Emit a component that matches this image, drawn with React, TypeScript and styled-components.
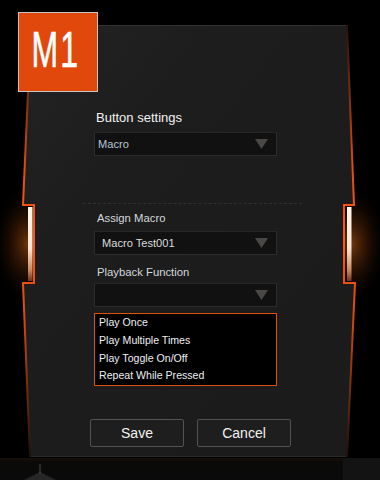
import styled, { createGlobalStyle } from 'styled-components';

const GlobalStyle = createGlobalStyle`
  html, body {
    margin: 0;
    padding: 0;
    background: #000;
  }
  body {
    font-family: 'Liberation Sans', Arial, sans-serif;
  }
`;

const Stage = styled.div`
  width: 380px;
  height: 480px;
  background: #000;
  overflow: hidden;
  display: flex;
  flex-direction: column;
`;

const FrameArea = styled.div`
  position: relative;
  height: 458px;
  flex-shrink: 0;
`;

const FrameSvg = styled.svg`
  position: absolute;
  left: 0;
  top: 0;
`;

const Badge = styled.div`
  position: absolute;
  left: 18px;
  top: 12px;
  width: 78px;
  height: 78px;
  box-sizing: content-box;
  border: 1px solid #c9c4c0;
  background: #e1480b;
  display: flex;
  justify-content: center;
  align-items: flex-start;
  z-index: 2;
`;

const BadgeText = styled.span`
  display: block;
  margin-top: 12px;
  margin-right: 4px;
  font-family: 'Liberation Sans', Arial, sans-serif;
  font-size: 50px;
  line-height: 50px;
  color: #fff;
  transform: scaleX(0.64);
  letter-spacing: 3px;
  -webkit-text-stroke: 0.6px #fff;
`;

const Content = styled.div`
  position: relative;
  z-index: 1;
  width: 183px;
  margin-left: 94px;
  padding-top: 110px;
  display: flex;
  flex-direction: column;
`;

const Title = styled.div`
  font-size: 13px;
  line-height: 16px;
  color: #f2f2f2;
  padding-left: 2px;
  margin-bottom: 6px;
`;

const FieldLabel = styled.div<{ $gapTop: number; $gapBottom: number }>`
  font-size: 11.3px;
  line-height: 14px;
  color: #d4d8dc;
  padding-left: 3px;
  margin-top: ${(p) => p.$gapTop}px;
  margin-bottom: ${(p) => p.$gapBottom}px;
`;

const Select = styled.div<{ $indent: number; $tint?: boolean }>`
  height: 24px;
  box-sizing: border-box;
  border: 1px solid #2c2c2c;
  border-top-color: #262626;
  background: #111;
  display: flex;
  align-items: center;
  justify-content: space-between;
  padding: 0 8px 0 ${(p) => p.$indent}px;
  font-size: 11.1px;
  color: ${(p) => (p.$tint ? '#b6c6d8' : '#dcdcdc')};
`;

const Divider = styled.div`
  margin: 47px 0 0 -11px;
  width: 219px;
  border-top: 1px dashed #303030;
`;

const OptionList = styled.ul`
  list-style: none;
  margin: 6px 0 0;
  padding: 0;
  border: 1px solid #e0500f;
  background: #000;
`;

const OptionItem = styled.li`
  font-size: 10.6px;
  line-height: 17.75px;
  color: #eceff2;
  padding-left: 4px;
  white-space: nowrap;
`;

const ButtonRow = styled.div`
  display: flex;
  gap: 13px;
  width: 200px;
  margin: 33px 0 0 -4px;
`;

const ActionButton = styled.button`
  flex: 0 0 94px;
  width: 94px;
  height: 28px;
  box-sizing: border-box;
  border: 1px solid #525252;
  border-radius: 2px;
  background: #1e1e1e;
  color: #f2f2f2;
  font-family: 'Liberation Sans', Arial, sans-serif;
  font-size: 14px;
  padding: 0;
  cursor: pointer;
`;

const Footer = styled.div`
  flex: 1;
  display: flex;
  background: linear-gradient(#1a0f08 0px, #0b0a09 4px, #0a0a0a 100%);
`;

const FooterLeft = styled.div`
  flex: 1;
  display: flex;
  align-items: flex-end;
  padding-left: 23px;
`;

const FooterRight = styled.div`
  width: 37px;
  background: #131313;
`;

const Arrow = () => (
  <svg width="13" height="10" viewBox="0 0 13 10">
    <polygon points="0,0 13,0 6.5,10" fill="#4b4744" />
  </svg>
);

const FrameArt = () => (
  <FrameSvg width="380" height="458" viewBox="0 0 380 458">
    <defs>
      <radialGradient id="glow" cx="0.5" cy="0.5" r="0.5">
        <stop offset="0" stopColor="#b85a14" stopOpacity="0.6" />
        <stop offset="0.4" stopColor="#6a2e08" stopOpacity="0.4" />
        <stop offset="1" stopColor="#000" stopOpacity="0" />
      </radialGradient>
      <linearGradient id="edge" x1="0" y1="25" x2="0" y2="457" gradientUnits="userSpaceOnUse">
        <stop offset="0" stopColor="#24120a" />
        <stop offset="0.16" stopColor="#7a2e0e" />
        <stop offset="0.34" stopColor="#e84c12" />
        <stop offset="0.5" stopColor="#ff5814" />
        <stop offset="0.68" stopColor="#d84810" />
        <stop offset="0.86" stopColor="#6a2a0c" />
        <stop offset="1" stopColor="#1c100a" />
      </linearGradient>
      <linearGradient id="bar" x1="0" y1="0" x2="0" y2="1">
        <stop offset="0" stopColor="#fff6ec" />
        <stop offset="0.55" stopColor="#fbe6d4" />
        <stop offset="0.85" stopColor="#c98a62" />
        <stop offset="1" stopColor="#70361c" />
      </linearGradient>
      <linearGradient id="sheen" x1="0" y1="0" x2="1" y2="1">
        <stop offset="0" stopColor="#232323" />
        <stop offset="0.3" stopColor="#1d1d1d" />
        <stop offset="1" stopColor="#1b1b1b" />
      </linearGradient>
    </defs>

    <ellipse cx="28" cy="244" rx="36" ry="62" fill="url(#glow)" />
    <ellipse cx="352" cy="244" rx="36" ry="62" fill="url(#glow)" />

    <polygon
      points="31,25 347,25 354,205 343,205 343,283 355,283 347,457 30,457 23,283 34,283 34,205 23,205"
      fill="url(#sheen)"
    />
    <line x1="31" y1="25.5" x2="347" y2="25.5" stroke="#333" strokeWidth="1" />
    <line x1="30" y1="456.5" x2="347" y2="456.5" stroke="#2a2a2a" strokeWidth="1" />

    <polyline
      points="31,25 23,205 34,205 34,283 23,283 30,457"
      fill="none"
      stroke="url(#edge)"
      strokeWidth="2"
    />
    <polyline
      points="347,25 354,205 344,205 344,283 355,283 347,457"
      fill="none"
      stroke="url(#edge)"
      strokeWidth="2"
    />

    <rect x="28" y="207" width="4.5" height="74" fill="url(#bar)" />
    <rect x="347" y="207" width="4.5" height="74" fill="url(#bar)" />
  </FrameSvg>
);

const playbackOptions = [
  'Play Once',
  'Play Multiple Times',
  'Play Toggle On/Off',
  'Repeat While Pressed'
];

const App = () => {
  return (
    <>
      <GlobalStyle />
      <Stage>
        <FrameArea>
          <FrameArt />
          <Badge>
            <BadgeText>M1</BadgeText>
          </Badge>

          <Content>
            <Title>Button settings</Title>
            <Select $indent={3} $tint>
              <span>Macro</span>
              <Arrow />
            </Select>

            <Divider />

            <FieldLabel $gapTop={7} $gapBottom={6}>Assign Macro</FieldLabel>
            <Select $indent={7}>
              <span>Macro Test001</span>
              <Arrow />
            </Select>

            <FieldLabel $gapTop={10} $gapBottom={4}>Playback Function</FieldLabel>
            <Select $indent={7}>
              <span />
              <Arrow />
            </Select>

            <OptionList>
              {playbackOptions.map((option) => (
                <OptionItem key={option}>{option}</OptionItem>
              ))}
            </OptionList>

            <ButtonRow>
              <ActionButton>Save</ActionButton>
              <ActionButton>Cancel</ActionButton>
            </ButtonRow>
          </Content>
        </FrameArea>

        <Footer>
          <FooterLeft>
            <svg width="34" height="16" viewBox="0 0 34 16">
              <polygon points="1,16 17,8 33,16" fill="#262626" />
              <line x1="17" y1="0" x2="17" y2="10" stroke="#4a4a4a" strokeWidth="1" />
            </svg>
          </FooterLeft>
          <FooterRight />
        </Footer>
      </Stage>
    </>
  );
};

export default App;
